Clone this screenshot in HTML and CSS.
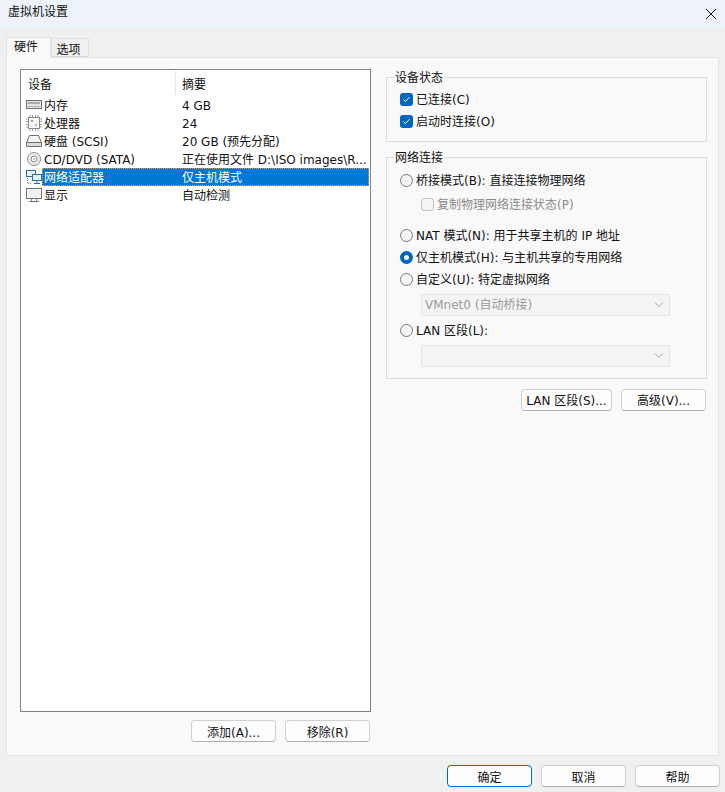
FILE: index.html
```html
<!DOCTYPE html>
<html lang="zh">
<head>
<meta charset="utf-8">
<title>虚拟机设置</title>
<link rel="stylesheet" href="styles.css">
</head>
<body>
<div class="window">
  <header class="titlebar">
    <span>虚拟机设置</span>
    <svg class="close" width="10" height="10" viewBox="0 0 10 10"><path d="M0 0L10 10M10 0L0 10" stroke="#111" stroke-width="1" fill="none"/></svg>
  </header>
  <div class="tabs">
    <div class="tab active">硬件</div>
    <div class="tab">选项</div>
  </div>
  <main class="panel">
    <section class="left">
      <div class="listbox">
        <div class="listhead">
          <div class="col-a">设备</div>
          <div class="col-b">摘要</div>
        </div>
        <div class="row">
          <div class="col-a">
            <svg class="ico" width="16" height="16" viewBox="0 0 16 16"><rect x="0.500" y="3.500" width="15" height="8" fill="#e4e4e4" stroke="#6e6e6e"/><rect x="2" y="5" width="12" height="2" fill="#a9a9a9"/><path d="M2 9.500h12" stroke="#9a9a9a" stroke-dasharray="2 1"/></svg>
            <span>内存</span>
          </div>
          <div class="col-b">4 GB</div>
        </div>
        <div class="row">
          <div class="col-a">
            <svg class="ico" width="16" height="16" viewBox="0 0 16 16"><rect x="2.500" y="2.500" width="11" height="11" fill="#f7f7f7" stroke="#8a8a8a"/><rect x="5" y="5" width="2" height="2" fill="#9a9a9a"/><rect x="9" y="9" width="2" height="2" fill="#b5b5b5"/><path d="M4 0v2M6.500 0v2M9.500 0v2M12 0v2M4 14v2M6.500 14v2M9.500 14v2M12 14v2M0 4h2M0 6.500h2M0 9.500h2M0 12h2M14 4h2M14 6.500h2M14 9.500h2M14 12h2" stroke="#a0a0a0"/></svg>
            <span>处理器</span>
          </div>
          <div class="col-b">24</div>
        </div>
        <div class="row">
          <div class="col-a">
            <svg class="ico" width="16" height="16" viewBox="0 0 16 16"><path d="M3.500 2.500h9l3 7v4h-15v-4z" fill="#f5f5f5" stroke="#6e6e6e"/><path d="M0.500 9.500h15" stroke="#6e6e6e"/><rect x="1" y="10" width="14" height="3" fill="#dcdcdc"/></svg>
            <span>硬盘 (SCSI)</span>
          </div>
          <div class="col-b">20 GB (预先分配)</div>
        </div>
        <div class="row">
          <div class="col-a">
            <svg class="ico" width="16" height="16" viewBox="0 0 16 16"><circle cx="8" cy="8" r="6.500" fill="#ececec" stroke="#8e8e8e"/><circle cx="8" cy="8" r="3" fill="#fff" stroke="#8a8a8a"/><circle cx="8" cy="8" r="1" fill="#b0b0b0"/></svg>
            <span>CD/DVD (SATA)</span>
          </div>
          <div class="col-b">正在使用文件 D:\ISO images\R...</div>
        </div>
        <div class="row selected">
          <div class="col-a">
            <svg class="ico" width="16" height="16" viewBox="0 0 16 16"><rect x="0.500" y="1.500" width="9" height="6" fill="#e6f0f8" stroke="#2a6ea5"/><rect x="6.500" y="5.500" width="9" height="6" fill="#e6f0f8" stroke="#2a6ea5"/><path d="M11 12v2M8 14.500h6" stroke="#2a6ea5"/><path d="M1.500 9v5.500h4" stroke="#5f8fb8" stroke-dasharray="1 1" fill="none"/></svg>
            <span class="sel-text">网络适配器</span>
          </div>
          <div class="col-b sel-text">仅主机模式</div>
        </div>
        <div class="row">
          <div class="col-a">
            <svg class="ico" width="16" height="16" viewBox="0 0 16 16"><rect x="0.500" y="1.500" width="15" height="10" fill="#fafafa" stroke="#707070"/><rect x="2" y="3" width="12" height="7" fill="#f0f0f0"/><path d="M5.500 12v2M10.500 12v2" stroke="#8a8a8a"/><path d="M3 14.500h10" stroke="#707070"/></svg>
            <span>显示</span>
          </div>
          <div class="col-b">自动检测</div>
        </div>
      </div>
      <div class="actions left-actions">
        <button class="btn">添加(A)...</button>
        <button class="btn">移除(R)</button>
      </div>
    </section>
    <section class="right">
      <fieldset class="group status">
        <legend>设备状态</legend>
        <div class="opt"><span class="check on"><svg width="9" height="9" viewBox="0 0 9 9"><path d="M1.500 4.800L3.500 6.500L7.500 2.200" stroke="#fff" fill="none"/></svg></span>已连接(C)</div>
        <div class="opt"><span class="check on"><svg width="9" height="9" viewBox="0 0 9 9"><path d="M1.500 4.800L3.500 6.500L7.500 2.200" stroke="#fff" fill="none"/></svg></span>启动时连接(O)</div>
      </fieldset>
      <fieldset class="group network">
        <legend>网络连接</legend>
        <div class="opt"><span class="radio"></span>桥接模式(B): 直接连接物理网络</div>
        <div class="opt sub muted"><span class="check off"></span>复制物理网络连接状态(P)</div>
        <div class="opt gap-top"><span class="radio"></span>NAT 模式(N): 用于共享主机的 IP 地址</div>
        <div class="opt"><span class="radio on"></span>仅主机模式(H): 与主机共享的专用网络</div>
        <div class="opt"><span class="radio"></span>自定义(U): 特定虚拟网络</div>
        <div class="select"><span>VMnet0 (自动桥接)</span><svg width="10" height="6" viewBox="0 0 10 6"><path d="M1 0.500L5 4.500L9 0.500" stroke="#a8a8a8" fill="none"/></svg></div>
        <div class="opt lan"><span class="radio"></span>LAN 区段(L):</div>
        <div class="select second"><span></span><svg width="10" height="6" viewBox="0 0 10 6"><path d="M1 0.500L5 4.500L9 0.500" stroke="#a8a8a8" fill="none"/></svg></div>
      </fieldset>
      <div class="actions right-actions">
        <button class="btn lan-btn">LAN 区段(S)...</button>
        <button class="btn">高级(V)...</button>
      </div>
    </section>
  </main>
  <footer class="footer">
    <button class="btn primary">确定</button>
    <button class="btn">取消</button>
    <button class="btn">帮助</button>
  </footer>
</div>
</body>
</html>
```
FILE: styles.css
```css
* { box-sizing: border-box; }
html, body { margin: 0; padding: 0; }
body {
  width: 725px;
  height: 792px;
  overflow: hidden;
  background: #f0f0f0;
  color: #111;
  font-family: "DejaVu Sans", "Noto Sans CJK SC", sans-serif;
  font-size: 12px;
  line-height: 18px;
}
.window { display: flex; flex-direction: column; height: 792px; }
.titlebar {
  height: 28px;
  flex: none;
  background: #eef3f9;
  display: flex;
  align-items: center;
  justify-content: space-between;
  padding: 0 7px 4px 8px;
}
.close { margin-right: 2px; margin-top: 4px; }
.tabs { display: flex; align-items: flex-end; height: 29px; padding: 9px 0 0 6px; flex: none; position: relative; z-index: 1; }
.tab {
  width: 38px;
  height: 19px;
  border: 1px solid #e2e2e2;
  border-bottom: 1px solid #d9d9d9;
  background: #f0f0f0;
  text-align: center;
  line-height: 20px;
  padding: 1px 3px 0 0;
}
.tab.active {
  width: 45px;
  height: 21px;
  background: #f9f9f9;
  border-bottom-color: #f9f9f9;
  margin-bottom: -1px;
  line-height: 19px;
  padding: 0 5px 0 0;
}
.panel {
  margin-left: 6px;
  width: 713px;
  height: 699px;
  flex: none;
  background: #f9f9f9;
  border: 1px solid #e4e4e4;
  padding: 11px 11px 12px 13px;
  display: flex;
  gap: 15px;
}
.left { width: 351px; flex: none; display: flex; flex-direction: column; }
.listbox {
  width: 351px;
  height: 643px;
  background: #fff;
  border: 1px solid #82828c;
  padding: 1px 1px 0;
}
.listhead { display: flex; height: 24px; margin-bottom: 1px; }
.listhead .col-a { display: block; padding-left: 6px; border-right: 1px solid #e5e5e5; height: 24px; line-height: 28px; }
.listhead .col-b { padding-left: 6px; height: 24px; line-height: 28px; }
.col-a { width: 154px; flex: none; display: flex; align-items: center; }
.col-b { flex: 1; padding-left: 6px; white-space: nowrap; }
.row { display: flex; height: 18px; align-items: center; }
.row .col-a { padding-left: 4px; }
.row span, .row .col-b { height: 18px; line-height: 20px; }
.ico { flex: none; margin-right: 2px; }
.row.selected .sel-text { background: #0078d4; color: #fff; border: 1px dotted #e09a4a; }
.row.selected .col-a span { flex: 1; margin-left: -2px; padding-left: 1px; border-right: none; line-height: 18px; }
.row.selected .col-b { border-left: none; line-height: 18px; }
.actions { display: flex; justify-content: flex-end; gap: 9px; }
.left-actions { margin-top: 8px; padding-right: 1px; }
.btn {
  width: 85px;
  height: 22px;
  padding: 3px 0 0;
  font: inherit;
  color: #111;
  background: #fdfdfd;
  border: 1px solid #d0d0d0;
  border-bottom-color: #b0b0b0;
  border-radius: 4px;
}
.btn.primary { border: 1px solid #0067c0; }
.right-actions .btn { padding-top: 1px; }
.lan-btn { width: 91px; }
.right { width: 321px; flex: none; }
.group {
  margin: 0;
  border: 1px solid #dcdcdc;
  padding: 0;
  min-width: 0;
}
.group legend { padding: 0 1px; margin-left: -6px; height: 18px; line-height: 21px; }
.status { height: 74px; margin-top: -1px; padding-left: 13px; padding-top: 3px; }
.network { height: 231px; margin-top: 6px; padding: 4px 0 0 13px; }
.opt { display: flex; align-items: center; height: 22px; white-space: nowrap; }
.sub { padding-left: 21px; margin-top: 2px; }
.gap-top { margin-top: 9px; }
.muted { color: #8a8a8a; }
.check {
  width: 13px;
  height: 13px;
  margin: 0 3px 2px 0;
  flex: none;
  border-radius: 3px;
  display: flex;
  align-items: center;
  justify-content: center;
}
.check.on { background: #0067c0; }
.check.off { background: #f5f5f5; border: 1px solid #c4c4c4; }
.radio {
  width: 13px;
  height: 13px;
  margin: 0 3px 2px 0;
  flex: none;
  border-radius: 50%;
  border: 1px solid #7a7a7a;
  background: #f5f5f5;
}
.radio.on { border: 4px solid #0067c0; background: #fff; }
.select {
  width: 249px;
  height: 22px;
  margin: 3px 0 0 21px;
  padding: 0 5px 0 3px;
  display: flex;
  align-items: center;
  justify-content: space-between;
  border: 1px solid #e4e4e4;
  background: #f4f4f4;
  color: #9a9a9a;
  border-radius: 2px;
}
.lan { margin-top: 4px; }
.second { margin-top: 3px; }
.right-actions { margin-top: 10px; padding-right: 1px; }
.footer { display: flex; justify-content: flex-end; gap: 9px; padding: 9px 5px 0 0; }
```
